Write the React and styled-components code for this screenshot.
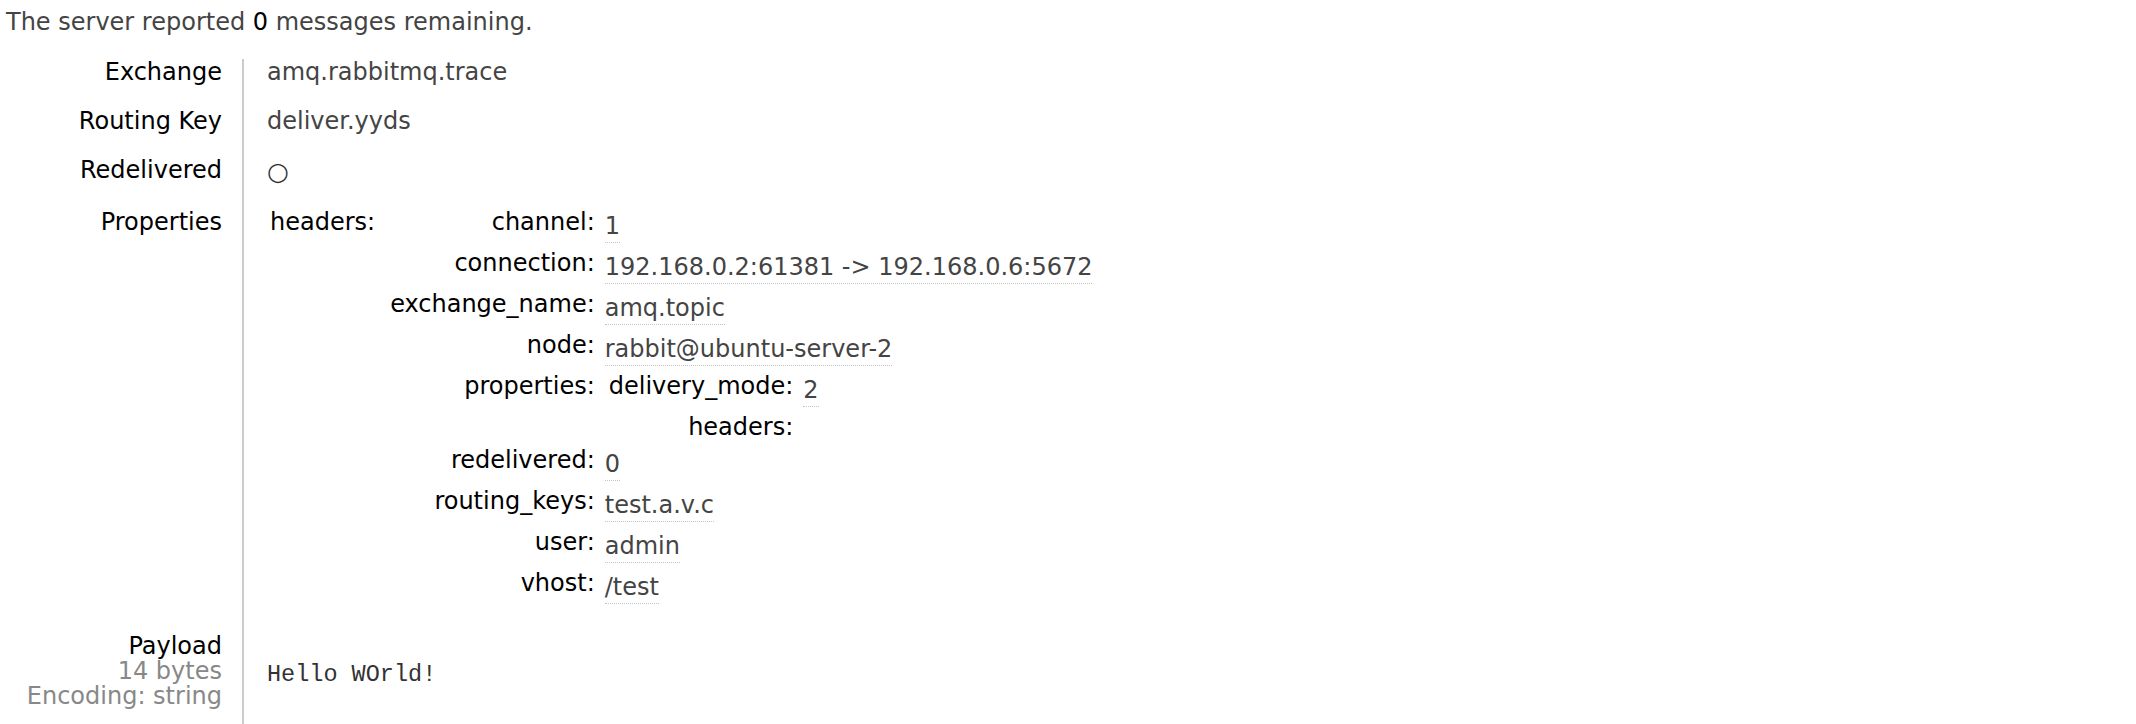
import React from 'react'
import styled, { createGlobalStyle } from 'styled-components'

const GlobalStyle = createGlobalStyle`
  body {
    margin: 0;
    background: #fff;
    font-family: "DejaVu Sans", Verdana, sans-serif;
    font-size: 24px;
  }
`

const Page = styled.div`
  padding: 9px 0 0 0;
`

const Summary = styled.p`
  margin: 0 0 24px;
  padding-left: 6px;
  line-height: 26px;
  color: #444;
  b {
    font-weight: normal;
    color: #000;
  }
`

const Facts = styled.div`
  display: grid;
  grid-template-columns: 244px 1fr;
  align-items: stretch;
`

const FactLabel = styled.div`
  box-sizing: border-box;
  text-align: right;
  padding: 0 20px 23px 0;
  border-right: 2px solid #ccc;
  line-height: ${(p) => (p.$stacked ? '25px' : '26px')};
  color: #000;
  white-space: nowrap;
`

const Sub = styled.div`
  color: #888;
`

const FactValue = styled.div`
  padding: 0 0 23px 23px;
  line-height: 26px;
  color: #444;
`

const Mark = styled.span`
  display: inline-block;
  line-height: 29px;
  font-size: 25px;
  color: #333;
`

const HeaderBlock = styled.div`
  display: flex;
  align-items: flex-start;
`

const HeadKey = styled.div`
  padding-left: 3px;
  margin-right: 15px;
  color: #000;
`

const KeyValues = styled.div`
  display: grid;
  grid-template-columns: auto auto;
  align-items: start;
  justify-content: start;
  padding-left: ${(p) => (p.$inner ? '4px' : '0')};
`

const Key = styled.div`
  text-align: right;
  padding: 0 10px 7px 0;
  color: #000;
  white-space: nowrap;
`

const Val = styled.div`
  padding-bottom: ${(p) => (p.$nested ? '0' : '7px')};
  white-space: nowrap;
`

const Typed = styled.abbr`
  display: inline-block;
  margin-top: 4px;
  padding-bottom: 3px;
  border-bottom: 1px dotted #c4c4c4;
  text-decoration: none;
  color: #444;
`

const Payload = styled.pre`
  margin: 27px 0 0;
  font-family: "Liberation Mono", "Courier New", monospace;
  font-size: 23.5px;
  line-height: 28px;
  color: #333;
`

const headers = [
  ['channel', '1'],
  ['connection', '192.168.0.2:61381 -> 192.168.0.6:5672'],
  ['exchange_name', 'amq.topic'],
  ['node', 'rabbit@ubuntu-server-2'],
  ['properties', null],
  ['redelivered', '0'],
  ['routing_keys', 'test.a.v.c'],
  ['user', 'admin'],
  ['vhost', '/test'],
]

const App = () => {
  return (
    <Page>
      <GlobalStyle />
      <Summary>
        The server reported <b>0</b> messages remaining.
      </Summary>
      <Facts>
        <FactLabel>Exchange</FactLabel>
        <FactValue>amq.rabbitmq.trace</FactValue>

        <FactLabel>Routing Key</FactLabel>
        <FactValue>deliver.yyds</FactValue>

        <FactLabel>Redelivered</FactLabel>
        <FactValue>
          <Mark>○</Mark>
        </FactValue>

        <FactLabel>Properties</FactLabel>
        <FactValue>
          <HeaderBlock>
            <HeadKey>headers:</HeadKey>
            <KeyValues>
              {headers.map(([k, v]) => (
                <React.Fragment key={k}>
                  <Key>{k}:</Key>
                  {v === null ? (
                    <Val $nested>
                      <KeyValues $inner>
                        <Key>delivery_mode:</Key>
                        <Val>
                          <Typed title="number">2</Typed>
                        </Val>
                        <Key>headers:</Key>
                        <Val />
                      </KeyValues>
                    </Val>
                  ) : (
                    <Val>
                      <Typed title="string">{v}</Typed>
                    </Val>
                  )}
                </React.Fragment>
              ))}
            </KeyValues>
          </HeaderBlock>
        </FactValue>

        <FactLabel $stacked>
          Payload
          <Sub>14 bytes</Sub>
          <Sub>Encoding: string</Sub>
        </FactLabel>
        <FactValue>
          <Payload>Hello WOrld!</Payload>
        </FactValue>
      </Facts>
    </Page>
  )
}

export default App
